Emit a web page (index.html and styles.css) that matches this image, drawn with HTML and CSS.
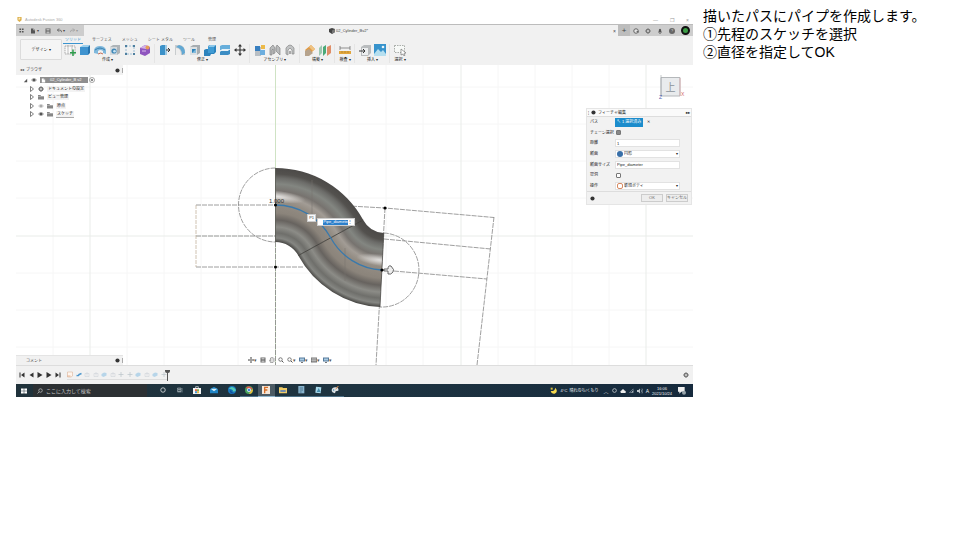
FILE: index.html
```html
<!DOCTYPE html>
<html lang="ja">
<head>
<meta charset="utf-8">
<meta name="viewport" content="width=device-width, initial-scale=1">
<title>パイプの作成</title>
<link rel="stylesheet" href="styles.css">
</head>
<body>
<svg class="defs" aria-hidden="true">
  <symbol id="grid" viewBox="0 0 12 12"><path d="M1 1h4v4H1zM7 1h4v4H7zM1 7h4v4H1zM7 7h4v4H7z" fill="#555"/></symbol>
  <symbol id="doc" viewBox="0 0 12 12"><path d="M2 1h5l3 3v7H2z" fill="#555"/><path d="M7 1v3h3" stroke="#ddd" fill="none"/></symbol>
  <symbol id="page" viewBox="0 0 12 12"><path d="M2 1h5l3 3v7H2z" fill="#fff"/><path d="M7 1v3h3" stroke="#888" fill="none"/></symbol>
  <symbol id="save" viewBox="0 0 12 12"><path d="M1 1h10v10H1z" fill="#666"/><path d="M3 2h6v3H3zM3 7h6v4H3z" fill="#bbb"/></symbol>
  <symbol id="undo" viewBox="0 0 12 12"><path d="M5 1 1 5l4 4M1 5h6q4 0 4 5" fill="none" stroke="currentColor" stroke-width="1.6"/></symbol>
  <symbol id="sketch" viewBox="0 0 12 12"><path d="M1 2h10v8H1z" fill="#fafafa" stroke="#8b8b8b" stroke-width=".7" stroke-dasharray="1.5 .7"/><path d="M4 1v9M8 1v9" stroke="#999" stroke-width=".6"/><path d="M9 5.500v6.500M6 8.800h6" stroke="#2f9d4d" stroke-width="1.500"/></symbol>
  <symbol id="box" viewBox="0 0 12 12"><path d="m1 3 3-2h7L9 3z" fill="#9dd0ed"/><path d="M1 3h8v8H1z" fill="#3f93cf"/><path d="m9 3 2-2v8l-2 2z" fill="#2774af"/></symbol>
  <symbol id="revolve" viewBox="0 0 12 12"><path d="M0 9V6q1-4 6-4t6 4v4L9 9V7Q6 5 4 7v3z" fill="#7fb8dc"/><path d="M1 6q5-4 10 0" stroke="#397fae" fill="none"/><path d="M4 10q3-2 5 0" stroke="#c06b55" fill="none"/></symbol>
  <symbol id="hole" viewBox="0 0 12 12"><path d="m1 3 3-2h7v8l-3 2H1z" fill="#aeb4b8"/><path d="M1 3h7v8H1z" fill="#d5d9dc"/><circle cx="5" cy="7" r="2.600" fill="#3f88b8"/><circle cx="5.500" cy="7.300" r="1.300" fill="#c9e3f2"/></symbol>
  <symbol id="frame" viewBox="0 0 12 12"><path d="M2 2h8v8H2z" fill="none" stroke="#8ab4d0" stroke-width=".8" stroke-dasharray="2 1"/><path d="M1 1h2v2H1zM9 1h2v2H9zM1 9h2v2H1zM9 9h2v2H9z" fill="#4e7f9f"/></symbol>
  <symbol id="form" viewBox="0 0 12 12"><path d="m1 4 5-3 5 2v6l-5 3-5-2z" fill="#8f55bf"/><path d="m1 4 5-3 5 2-4 2z" fill="#d2b1e8"/><circle cx="8.500" cy="3.500" r="2" fill="#e59b55"/><path d="M3 7h4" stroke="#d9bbed"/></symbol>
  <symbol id="press" viewBox="0 0 12 12"><path d="m1 2 2-1h3v10H1z" fill="#3b91c8"/><path d="M6 1h2v10H6z" fill="#9fcae5"/><path d="M7 6h4M9 4l2 2-2 2" stroke="#333" fill="none"/></symbol>
  <symbol id="fillet" viewBox="0 0 12 12"><path d="M1 1h5q5 1 5 7v3H1z" fill="#c8ccce"/><path d="M5 1q6 1 6 8l-3 2Q8 4 2 3z" fill="#62a8d3"/><path d="M2 4q5 0 5 7H2z" fill="#eee"/></symbol>
  <symbol id="shell" viewBox="0 0 12 12"><path d="m1 3 3-2h7v8l-3 2H1z" fill="#a7adb1"/><path d="M1 3h7v8H1z" fill="#dce0e2"/><path d="M3 5h4v4H3z" fill="#2f83ba"/><path d="m3 9 4-4v4z" fill="#83bbdc"/></symbol>
  <symbol id="combine" viewBox="0 0 12 12"><path d="m4 2 2-1h6v7l-2 2H7l-1 2H0V6l2-1h2z" fill="#2c83bd"/><path d="M4 3h6v6H4z" fill="#3f9bd4"/><path d="m4 3 2-2h6l-2 2z" fill="#8dc7e9"/></symbol>
  <symbol id="split" viewBox="0 0 12 12"><path d="m1 2 2-1h8v4L9 6H1z" fill="#67aedb"/><path d="m1 8 2-2h8v4l-2 1H1z" fill="#3c8dc4"/><path d="m1 7 2-2h8L9 7z" fill="#e8f2f8"/></symbol>
  <symbol id="move" viewBox="0 0 12 12"><path d="M6 1v10M1 6h10" stroke="#333" stroke-width="1.100"/><path d="m6 0 2 2.500H4zM6 12l2-2.500H4zM0 6l2.500-2v4zM12 6 9.500 4v4z" fill="#333"/></symbol>
  <symbol id="component" viewBox="0 0 12 12"><path d="M1 3h6v9H1z" fill="#b8bfc5"/><path d="M1 2h5v5H1z" fill="#387fc0"/><path d="M6 6h5v5H6z" fill="#6daede"/><path d="M7 1h4v4H7z" fill="#edba48"/></symbol>
  <symbol id="joint" viewBox="0 0 12 12"><path d="M1 11V4l3-3 2 3v5l-2 1V5L3 6v5zM11 11V4L8 1 7 3v4l2 2z" fill="#b9bbbc" stroke="#777" stroke-width=".6"/></symbol>
  <symbol id="asbuilt" viewBox="0 0 12 12"><path d="M2 10V4q4-6 8 0v6H8V6L6 4 4 6v5z" fill="#c1c3c4" stroke="#888" stroke-width=".7"/><path d="M5 7h2v3H5z" fill="#a9a9a9"/></symbol>
  <symbol id="plane" viewBox="0 0 12 12"><path d="m1 6 6-5 4 4-6 6z" fill="#df9a46"/><path d="m1 7 4-2 4 4-4 3H1z" fill="#b6a38d"/><path d="m7 1 4 4-2 2-4-4z" fill="#efc382"/></symbol>
  <symbol id="planes" viewBox="0 0 12 12"><path d="m0 4 3-3v8l-3 3z" fill="#9dc9b2"/><path d="m4 3 3-2v8l-3 3z" fill="#4ba978"/><path d="m8 3 4-2v8l-4 3z" fill="#df8e68"/></symbol>
  <symbol id="measure" viewBox="0 0 12 12"><path d="M0 7h12v3H0z" fill="#e2a63c"/><path d="M1 4h10M1 2v4M11 2v4" stroke="#666" stroke-width=".7"/><path d="M3 7v2M6 7v2M9 7v2" stroke="#8e6c30" stroke-width=".5"/></symbol>
  <symbol id="insert" viewBox="0 0 12 12"><path d="m2 3 3-2h7v8l-3 3H2z" fill="#b9bcbe"/><path d="M3 4h6v7H3z" fill="#eceeef"/><path d="M0 7h6M4 5l2 2-2 2" stroke="#333" fill="none"/></symbol>
  <symbol id="image" viewBox="0 0 12 12"><path d="M0 0h12v12H0z" fill="#3793cc"/><path d="m0 10 4-5 3 3 2-2 3 4v2H0z" fill="#b6dfef"/><circle cx="9" cy="3" r="1.300" fill="#e7f4fa"/></symbol>
  <symbol id="select" viewBox="0 0 12 12"><path d="M.5 1.500h10v7H.5z" fill="#f7f9f7" stroke="#8a8f8a" stroke-width=".7" stroke-dasharray="1.500 1"/><path d="m7 5 5 4-2 .3 1 2-1 .7-1-2-2 1z" fill="#fff" stroke="#666" stroke-width=".6"/></symbol>
  <symbol id="eye" viewBox="0 0 12 12"><path d="M0 6q6-8 12 0-6 8-12 0z" fill="#aaa"/><circle cx="6" cy="6" r="2.500" fill="#555"/></symbol>
  <symbol id="folder" viewBox="0 0 12 12"><path d="M0 2h5l1 2h6v7H0z" fill="#868686"/><path d="M0 5h12" stroke="#ccc"/></symbol>
  <symbol id="gear" viewBox="0 0 12 12"><circle cx="6" cy="6" r="3.500" fill="#ccc" stroke="#777" stroke-width="2.500"/><path d="M6 0v2M6 10v2M0 6h2M10 6h2M2 2l1 1M9 9l1 1M10 2 9 3M2 10l1-1" stroke="#777" stroke-width="1.500"/></symbol>
  <symbol id="tri" viewBox="0 0 12 12"><path d="m3 1 6 5-6 5z" fill="#fff" stroke="#555" stroke-width="1.500"/></symbol>
  <symbol id="tri-open" viewBox="0 0 12 12"><path d="M10 2v8H2z" fill="#555"/></symbol>
  <symbol id="pin" viewBox="0 0 12 12"><circle cx="6" cy="6" r="5" fill="#333"/></symbol>
  <symbol id="target" viewBox="0 0 12 12"><circle cx="6" cy="6" r="5" fill="none" stroke="#888" stroke-width="1.500"/><circle cx="6" cy="6" r="2" fill="#666"/></symbol>
  <symbol id="refresh" viewBox="0 0 12 12"><circle cx="6" cy="6" r="4.500" fill="#e5e5e5" stroke="#666" stroke-width="2"/><path d="M6 6h5v4z" fill="#666"/></symbol>
  <symbol id="hand" viewBox="0 0 12 12"><path d="m3 11-2-5 2 1V2l2-1 1 1 2-1 2 2v6l-2 2z" fill="#ddd" stroke="#666"/></symbol>
  <symbol id="lens" viewBox="0 0 12 12"><circle cx="5" cy="5" r="3.500" fill="none" stroke="currentColor" stroke-width="1.500"/><path d="m8 8 3 3" stroke="currentColor" stroke-width="2"/></symbol>
  <symbol id="search" viewBox="0 0 12 12"><circle cx="7" cy="5" r="3.500" fill="none" stroke="currentColor" stroke-width="1.500"/><path d="m4 8-3 3" stroke="currentColor" stroke-width="1.500"/></symbol>
  <symbol id="screen" viewBox="0 0 12 12"><path d="M0 1h12v8H0z" fill="#567a9c"/><path d="M2 3h8v4H2z" fill="#a9cbe3"/><path d="M4 10h4v2H4z" fill="#777"/></symbol>
  <symbol id="panes" viewBox="0 0 12 12"><path d="M0 1h12v10H0z" fill="#777"/><path d="M1 4h10M1 7h10M4 2v8M8 2v8" stroke="#ddd"/></symbol>
  <symbol id="back" viewBox="0 0 12 12"><path d="m11 1-8 5 8 5z" fill="#333"/></symbol>
  <symbol id="play" viewBox="0 0 12 12"><path d="m1 0 10 6-10 6z" fill="#333"/></symbol>
  <symbol id="first" viewBox="0 0 12 12"><path d="M1 1h2v10H1zM11 1 4 6l7 5z" fill="#333"/></symbol>
  <symbol id="last" viewBox="0 0 12 12"><path d="M9 1h2v10H9zM1 1l7 5-7 5z" fill="#333"/></symbol>
  <symbol id="tsketch" viewBox="0 0 12 12"><path d="M1 1h10v8l-3 2H1z" fill="#fff5ed" stroke="#d7a88b"/><path d="M1 9h6" stroke="#d27d4b"/></symbol>
  <symbol id="tpipe" viewBox="0 0 12 12"><path d="M1 8q5 1 5-2l5-2" fill="none" stroke="#4e98cd" stroke-width="3"/></symbol>
  <symbol id="tfaint" viewBox="0 0 12 12"><path d="M2 4h8v6H2zM6 1v7" fill="none" stroke="#c8cfd5"/></symbol>
  <symbol id="tblue" viewBox="0 0 12 12"><path d="m1 5 5-3 5 1v5l-6 3-4-2z" fill="#b7d5e9"/></symbol>
  <symbol id="tmove" viewBox="0 0 12 12"><path d="M6 1v10M1 6h10" stroke="#bcc5cb" stroke-width="1.500"/></symbol>
  <symbol id="win" viewBox="0 0 12 12"><path d="M0 1h5.500v4.500H0zM6.500 1H12v4.500H6.500zM0 6.500h5.500V11H0zM6.500 6.500H12V11H6.500z" fill="#fff"/></symbol>
  <symbol id="ring" viewBox="0 0 12 12"><circle cx="6" cy="6" r="4.500" fill="none" stroke="#eee" stroke-width="1.500"/></symbol>
  <symbol id="tasks" viewBox="0 0 12 12"><path d="M1 2h7v2H1zM1 5h7v3H1zM1 9h7v1H1zM10 2v9" fill="none" stroke="#bbc5ca"/></symbol>
  <symbol id="store" viewBox="0 0 12 12"><path d="M0 3h12v9H0z" fill="#f4f4f4"/><path d="M4 3V1h4v2" fill="none" stroke="#eee"/><path d="M3 5h3v3H3z" fill="#e66345"/><path d="M6 5h3v3H6z" fill="#80b45b"/><path d="M3 8h3v3H3z" fill="#469bd3"/><path d="M6 8h3v3H6z" fill="#e5b94b"/></symbol>
  <symbol id="mail" viewBox="0 0 12 12"><path d="m0 5 6-4 6 4v6H0z" fill="#1f84c5"/><path d="M1 4h10L6 8z" fill="#d8f0f8"/></symbol>
  <symbol id="edge" viewBox="0 0 12 12"><circle cx="6" cy="6" r="6" fill="#1976bd"/><path d="M1 4q6-6 11 2-1 3-5 2 2-3-6-4z" fill="#54cbb6"/><path d="M3 7q0 5 6 4Q4 9 5 6z" fill="#0f4f9c"/></symbol>
  <symbol id="chrome" viewBox="0 0 12 12"><circle cx="6" cy="6" r="6" fill="#46a45c"/><path d="M1 3q5-6 11 2H6z" fill="#dc5145"/><path d="M12 5q0 7-6 7l3-6z" fill="#e7bc3c"/><circle cx="6" cy="6" r="2.600" fill="#4485dc" stroke="#fff"/></symbol>
  <symbol id="fusion" viewBox="0 0 12 12"><path d="M0 0h12v12H0z" fill="#f4e6d8"/><path d="M4 11V2h5M4 6h4" fill="none" stroke="#d56e27" stroke-width="2"/></symbol>
  <symbol id="files" viewBox="0 0 12 12"><path d="M0 2h5l1 1h6v8H0z" fill="#f0cc67"/><path d="M2 6h8v3H2z" fill="#708bad"/></symbol>
  <symbol id="note" viewBox="0 0 12 12"><path d="M2 0h9v11H2z" fill="#88b4ce"/><path d="M4 3h5M4 6h5M4 9h3" stroke="#345970"/></symbol>
  <symbol id="note2" viewBox="0 0 12 12"><path d="m3 1 8 1-1 9-8-1z" fill="#a9d9eb"/><path d="m4 9 3-6 3 6" fill="#478eae"/></symbol>
  <symbol id="paint" viewBox="0 0 12 12"><path d="M1 6q1-5 7-4 4 1 3 5l-4 1-1 3q-5-1-5-5z" fill="#dce2e5"/><path d="m7 5 4-5" stroke="#df8d51" stroke-width="1.500"/><circle cx="4" cy="6" r="1" fill="#3583ae"/></symbol>
  <symbol id="moon" viewBox="0 0 12 12"><path d="M8 1q5 6-1 9-5 1-6-4 6 1 7-5z" fill="#f5d94f"/><path d="M1 1h3v3H1z" fill="#d7bc3c"/></symbol>
  <symbol id="cloud" viewBox="0 0 12 12"><path d="M2 10q-3-3 1-5 3-5 6 0 4 1 2 5z" fill="#eee"/></symbol>
  <symbol id="wifi" viewBox="0 0 12 12"><path d="m1 11 9-9v9z" fill="none" stroke="#b7c0c6"/><path d="m5 11 5-5v5z" fill="#b7c0c6"/></symbol>
  <symbol id="sound" viewBox="0 0 12 12"><path d="M0 4h3l3-3v10L3 8H0z" fill="#bbc4c9"/><path d="M8 3q3 3 0 6M10 1q4 5 0 10" stroke="#bbc4c9" fill="none"/></symbol>
  <symbol id="chat" viewBox="0 0 12 12"><path d="M0 0h10v7H5l-3 3V7H0z" fill="#eee"/><circle cx="9" cy="8.500" r="3" fill="#98a4ab"/></symbol>
  <symbol id="bell" viewBox="0 0 12 12"><path d="M2 9q2-2 2-6 2-3 4 0 0 4 2 6zM5 10h2v2H5z" fill="#555"/></symbol>
  <symbol id="logo" viewBox="0 0 12 12"><path d="M1 0h10v8l-5 4-5-4z" fill="#ddb04d"/><path d="M4 2h4v2H6v3H4z" fill="#fff4cf"/></symbol>
  <symbol id="cube" viewBox="0 0 12 12"><path d="m0 2 6-2 6 2v6l-6 4-6-4z" fill="#444"/><path d="m6 5 6-3v6l-6 4z" fill="#777"/></symbol>
</svg>

<main class="page">
  <section class="app">
    <header class="titlebar">
      <svg class="i5"><use href="#logo"/></svg><span>Autodesk Fusion 360</span>
      <div class="winbtns"><button aria-label="最小化">—</button><button aria-label="元に戻す">❐</button><button aria-label="閉じる">×</button></div>
    </header>
    <div class="quick">
      <div class="quick-left">
        <svg class="i5"><use href="#grid"/></svg>
        <span class="pair"><svg class="i6"><use href="#doc"/></svg>▾</span>
        <svg class="i6"><use href="#save"/></svg>
        <span class="pair"><svg class="i5"><use href="#undo"/></svg>▾</span>
        <span class="pair dim"><svg class="i5 flip"><use href="#undo"/></svg>▾</span>
      </div>
      <div class="doc-tab"><span class="doc-name"><svg class="i6"><use href="#cube"/></svg>02_Cylinder_Bv2*</span><button aria-label="タブを閉じる">×</button></div>
      <div class="quick-right">
        <button class="plus" aria-label="新規タブ">+</button>
        <svg class="i6"><use href="#refresh"/></svg><svg class="i6"><use href="#gear"/></svg><svg class="i6"><use href="#bell"/></svg>
        <span class="help">?</span><span class="avatar"></span>
      </div>
    </div>
    <nav class="ribbon">
      <button class="design">デザイン ▾</button>
      <div class="ribbon-main">
        <div class="tabs">
          <a href="#" class="on">ソリッド</a><a href="#">サーフェス</a><a href="#">メッシュ</a><a href="#">シート メタル</a><a href="#">ツール</a><a href="#" class="manage">管理</a>
        </div>
        <div class="groups">
          <div class="group"><div class="icons"><svg><use href="#sketch"/></svg><svg><use href="#box"/></svg><svg><use href="#revolve"/></svg><svg><use href="#hole"/></svg><svg><use href="#frame"/></svg><svg><use href="#form"/></svg></div><span>作成 ▾</span></div>
          <div class="group"><div class="icons"><svg><use href="#press"/></svg><svg><use href="#fillet"/></svg><svg><use href="#shell"/></svg><svg><use href="#combine"/></svg><svg><use href="#split"/></svg><svg><use href="#move"/></svg></div><span>修正 ▾</span></div>
          <div class="group"><div class="icons"><svg><use href="#component"/></svg><svg><use href="#joint"/></svg><svg><use href="#asbuilt"/></svg></div><span>アセンブリ ▾</span></div>
          <div class="group"><div class="icons"><svg><use href="#plane"/></svg><svg><use href="#planes"/></svg></div><span>構築 ▾</span></div>
          <div class="group"><div class="icons"><svg><use href="#measure"/></svg></div><span>検査 ▾</span></div>
          <div class="group"><div class="icons"><svg><use href="#insert"/></svg><svg><use href="#image"/></svg></div><span>挿入 ▾</span></div>
          <div class="group"><div class="icons"><svg><use href="#select"/></svg></div><span>選択 ▾</span></div>
        </div>
      </div>
    </nav>

    <div class="viewport">
      <svg class="scene" viewBox="16 65 677 300">
        <defs>
          <radialGradient id="bend1" gradientUnits="userSpaceOnUse" cx="275.5" cy="268" r="100">
            <stop offset=".26" stop-color="#494845"/><stop offset=".30" stop-color="#858682"/><stop offset=".35" stop-color="#6f6f6b"/><stop offset=".41" stop-color="#8c8c87"/><stop offset=".48" stop-color="#67635f"/><stop offset=".55" stop-color="#8b847b"/><stop offset=".65" stop-color="#938c83"/><stop offset=".71" stop-color="#a29c95"/><stop offset=".77" stop-color="#77736f"/><stop offset=".84" stop-color="#838681"/><stop offset=".90" stop-color="#6c6c69"/><stop offset=".94" stop-color="#53514e"/><stop offset="1" stop-color="#4c4a48"/>
          </radialGradient>
          <radialGradient id="bend2" gradientUnits="userSpaceOnUse" cx="385" cy="208" r="99">
            <stop offset=".25" stop-color="#4c4a48"/><stop offset=".32" stop-color="#53514e"/><stop offset=".36" stop-color="#6c6c69"/><stop offset=".42" stop-color="#838681"/><stop offset=".48" stop-color="#77736f"/><stop offset=".54" stop-color="#a29c95"/><stop offset=".60" stop-color="#938c83"/><stop offset=".71" stop-color="#8b847b"/><stop offset=".78" stop-color="#67635f"/><stop offset=".85" stop-color="#8c8c87"/><stop offset=".91" stop-color="#6f6f6b"/><stop offset=".96" stop-color="#858682"/><stop offset="1" stop-color="#494845"/>
          </radialGradient>
          <radialGradient id="shine"><stop offset="0" stop-color="#fff" stop-opacity=".7"/><stop offset="1" stop-color="#fff" stop-opacity="0"/></radialGradient>
          <clipPath id="body"><path d="M275.500 168A100 100 0 0 1 363.200 220A25 25 0 0 0 383.800 233L380 307A99 99 0 0 1 298.200 255.500A26 26 0 0 0 275.500 242z"/></clipPath>
        </defs>
        <path d="M53 65v300M127 65v300M164 65v300M201 65v300M238 65v300M312 65v300M349 65v300M386 65v300M423 65v300M498 65v300M535 65v300M572 65v300M609 65v300M16 87h677M16 124h677M16 161h677M16 198h677M16 273h677M16 310h677M16 347h677" class="minor"/>
        <path d="M90 65v300M461 65v300M646 65v300M16 236h677" class="major"/>
        <path d="M275.500 65v300" class="axis"/>
        <g class="dash">
          <path d="M196 205h80M196 236h80M196 267h108M275.500 242v123M275.500 168A37 37 0 0 0 275.500 242"/>
          <path d="M340 205.500 385 208 494 217.500M384 239l107 10M382 270l105 9M494 217 477 365M385 208l-9 157M383.800 233A37 37 0 0 1 380 307"/>
        </g>
        <path d="M196 205v62" class="tan"/>
        <path d="M275.500 168A100 100 0 0 1 363.200 220L298.300 255.500A26 26 0 0 0 275.500 242z" fill="url(#bend1)"/>
        <path d="M363.200 220A25 25 0 0 0 383.800 233L380 307A99 99 0 0 1 298.200 255.500z" fill="url(#bend2)"/>
        <g clip-path="url(#body)">
          <ellipse cx="278" cy="196.500" rx="28" ry="6" transform="rotate(8 278 196.500)" fill="url(#shine)"/>
          <ellipse cx="380" cy="260" rx="24" ry="6" transform="rotate(8 380 260)" fill="url(#shine)"/>
        </g>
        <path d="M298.300 255.500 363.200 220" stroke="#34322f" stroke-width=".8"/>
        <path d="M312 180v34M345 248v33" stroke="#77736d" stroke-width=".5"/>
        <path d="M275.500 168v74M383.800 233 380 307" stroke="#454340" stroke-width=".7"/>
        <path d="M275.500 205A63 63 0 0 1 330.700 237.800A62 62 0 0 0 382 270" fill="none" stroke="#3979ac" stroke-width="1.300"/>
        <circle cx="275.500" cy="205" r="1.500"/><circle cx="275.500" cy="267" r="1.500"/><circle cx="385" cy="208" r="1.600"/><circle cx="382" cy="270" r="1.600"/>
        <path d="M384 269h4q0-4 3-3 4 4 2 6-2 3-5 2v-3h-4z" fill="#eee" stroke="#444" stroke-width=".8"/>
        <text x="269" y="203" class="dim-text">1.000</text>
        <g class="viewcube"><path d="M661 77.500h19v18.500h-19z" fill="#e9ebed" stroke="#b5b8bb"/><path d="M661 75v21" stroke="#9fa4a9" stroke-width=".6"/><path d="M680 78v18" stroke="#dc9a9a" stroke-width=".6"/><text x="670.500" y="90.500" text-anchor="middle" class="top">上</text><text x="659" y="99" fill="#5260b0">Z</text><text x="681" y="96" fill="#d26a6a">X</text></g>
      </svg>

      <aside class="browser">
        <div class="panel-head"><span>◂◂</span><span class="grow">ブラウザ</span><svg class="i5"><use href="#pin"/></svg><i></i></div>
        <ul>
          <li><svg class="i5"><use href="#tri-open"/></svg><svg class="i6"><use href="#eye"/></svg><span class="root"><svg class="i5"><use href="#page"/></svg>02_Cylinder_B v2</span><svg class="i6"><use href="#target"/></svg></li>
          <li class="sub"><svg class="i6"><use href="#tri"/></svg><svg class="i6"><use href="#gear"/></svg><span>ドキュメントの設定</span></li>
          <li class="sub"><svg class="i6"><use href="#tri"/></svg><svg class="i6"><use href="#folder"/></svg><span>ビュー管理</span></li>
          <li class="sub"><svg class="i6"><use href="#tri"/></svg><svg class="i6 faint"><use href="#eye"/></svg><svg class="i6"><use href="#folder"/></svg><span>原点</span></li>
          <li class="sub"><svg class="i6"><use href="#tri"/></svg><svg class="i6"><use href="#eye"/></svg><svg class="i6"><use href="#folder"/></svg><span class="under">スケッチ</span></li>
        </ul>
      </aside>

      <span class="tag">P1</span>
      <div class="float-input"><input aria-label="パイプ直径" value="Pipe_diameter"><span>⋮</span></div>

      <form class="dialog">
        <div class="dialog-head"><span>¦</span><svg class="i5"><use href="#pin"/></svg><span class="grow">フィーチャ編集</span><b>▸▸</b></div>
        <div class="fields">
          <label for="path">パス</label><div><button type="button" id="path" class="picked">↖ 1 選択済み</button><span>✕</span></div>
          <label for="chain">チェーン選択</label><div><input type="checkbox" id="chain" checked></div>
          <label for="dist">距離</label><div><input type="text" id="dist" value="1"></div>
          <label for="section">断面</label><div class="sel"><span class="dot"></span><select id="section"><option>円形</option></select></div>
          <label for="size">断面サイズ</label><div><input type="text" id="size" value="Pipe_diameter"></div>
          <label for="hollow">空洞</label><div><input type="checkbox" id="hollow"></div>
          <label for="op">操作</label><div class="sel"><span class="newbody"></span><select id="op"><option>新規ボディ</option></select></div>
        </div>
        <div class="dialog-foot"><svg class="i5"><use href="#pin"/></svg><button type="button">OK</button><button type="button">キャンセル</button></div>
      </form>

      <div class="comments panel-head"><span class="grow">コメント</span><svg class="i5"><use href="#pin"/></svg><i></i></div>
      <div class="navbar"><span><svg><use href="#move"/></svg>▾</span><svg><use href="#save"/></svg><svg><use href="#hand"/></svg><svg><use href="#lens"/></svg><span><svg><use href="#lens"/></svg>▾</span><span><svg><use href="#screen"/></svg>▾</span><span><svg><use href="#panes"/></svg>▾</span><span><svg><use href="#screen"/></svg>▾</span></div>
    </div>

    <div class="timeline">
      <div class="play"><svg><use href="#first"/></svg><svg><use href="#back"/></svg><svg><use href="#play"/></svg><svg><use href="#play"/></svg><svg><use href="#last"/></svg></div>
      <div class="steps"><svg><use href="#tsketch"/></svg><svg><use href="#tpipe"/></svg><svg><use href="#tfaint"/></svg><svg><use href="#tfaint"/></svg><svg><use href="#tblue"/></svg><svg><use href="#tfaint"/></svg><svg><use href="#tmove"/></svg><svg><use href="#tmove"/></svg><svg><use href="#tblue"/></svg><svg><use href="#tfaint"/></svg><svg><use href="#tblue"/></svg><svg><use href="#tmove"/></svg></div>
      <span class="marker"></span>
      <svg class="settings"><use href="#gear"/></svg>
    </div>

    <footer class="taskbar">
      <svg class="i6 start"><use href="#win"/></svg>
      <label class="search"><svg class="i6"><use href="#search"/></svg><input placeholder="ここに入力して検索"></label>
      <div class="apps"><span><svg class="i6"><use href="#ring"/></svg></span><span><svg class="i6"><use href="#tasks"/></svg></span><span><svg><use href="#store"/></svg></span><span><svg><use href="#mail"/></svg></span><span><svg><use href="#edge"/></svg></span><span class="run"><svg><use href="#chrome"/></svg></span><span class="active"><svg><use href="#fusion"/></svg></span><span class="run"><svg><use href="#files"/></svg></span><span class="run"><svg><use href="#note"/></svg></span><span class="run"><svg><use href="#note2"/></svg></span><span class="run"><svg><use href="#paint"/></svg></span></div>
      <div class="tray"><svg class="i8"><use href="#moon"/></svg><span class="weather">4°C&nbsp; 晴れのち/くもり</span><span>︿</span><svg class="i5"><use href="#ring"/></svg><svg class="i6"><use href="#cloud"/></svg><svg class="i5"><use href="#wifi"/></svg><svg class="i6"><use href="#sound"/></svg><span>A</span><time>16:06<br>2021/10/24</time><svg class="i8"><use href="#chat"/></svg></div>
    </footer>
  </section>

  <section class="notes">
    <p>描いたパスにパイプを作成します。</p>
    <p>①先程のスケッチを選択</p>
    <p>②直径を指定してOK</p>
  </section>
</main>
</body>
</html>
```
FILE: styles.css
```css
* { box-sizing: border-box; }
body { margin: 0; background: #fff; color: #444; font-family: "Liberation Sans", "Noto Sans CJK JP", sans-serif; font-size: 4px; line-height: 6px; }
button, input, select { font: inherit; color: inherit; margin: 0; padding: 0; border: 0; background: none; border-radius: 0; min-width: 0; white-space: nowrap; }
svg { display: block; flex: none; }
a { color: inherit; text-decoration: none; }
.defs { position: absolute; width: 0; height: 0; }
.i5 { width: 5px; height: 5px; }
.i6 { width: 6px; height: 6px; }
.i8 { width: 8px; height: 8px; }
.grow { flex: 1; }

.page { display: grid; grid-template-columns: minmax(0, 677fr) minmax(0, 257fr); gap: 10px; padding-left: 16px; align-items: start; }
.notes { padding-top: 7px; color: #000; font-family: "Liberation Sans", "Noto Sans CJK JP", sans-serif; font-size: 14px; line-height: 18px; }
.notes p { margin: 0; white-space: nowrap; }

.app { padding-top: 15px; }
.titlebar { display: flex; align-items: center; gap: 3px; height: 9px; padding: 0 4px 0 1px; color: #aaa; }
.winbtns { display: flex; gap: 12px; margin-left: auto; color: #999; font-size: 5px; }

.quick { display: flex; height: 12px; background: #f1f1f1; border-top: 1px solid #bcbcbc; }
.quick-left { display: flex; align-items: center; gap: 6px; width: 68px; padding-left: 3px; background: #cdcdcd; }
.pair { display: flex; align-items: center; gap: 1px; }
.pair + .pair { margin-left: -1px; }
.dim { color: #999; }
.flip { transform: scaleX(-1); }
.doc-tab { flex: 1; display: flex; align-items: center; padding-right: 2px; font-size: 5px; }
.doc-name { flex: 1; display: flex; align-items: center; justify-content: center; gap: 1px; font-size: 4px; }
.quick-right { display: flex; align-items: center; gap: 6px; width: 75px; padding-right: 3px; background: #cdcdcd; }
.plus { align-self: stretch; width: 12px; margin-right: -3px; background: #bdbdbd; font-size: 8px; }
.help { width: 6px; height: 6px; border-radius: 50%; background: #666; color: #ddd; text-align: center; }
.avatar { width: 9px; height: 9px; margin-left: auto; border: 2px solid #111; border-radius: 50%; background: #3b9c45; }

.ribbon { display: flex; height: 29px; background: #f1f1f1; }
.design { width: 42px; height: 21px; margin: 3px 0 0 4px; border: 1px solid #dcdcdc; border-radius: 1px; background: #f5f5f5; color: #222; }
.ribbon-main { width: 352px; margin-left: -2px; }
.tabs { display: flex; gap: 8px; padding-left: 3px; height: 8px; white-space: nowrap; }
.tabs a { flex: none; height: 8px; padding: 0 1px; line-height: 7px; color: #555; }
.tabs .on { padding: 0 2px; color: #3a94cf; border-bottom: 1px solid #3a94cf; }
.tabs .manage { padding-left: 4px; }
.groups { display: flex; }
.group { display: flex; flex-direction: column; align-items: center; padding: 0 3px 0 4px; border-right: 1px solid #e5e5e5; }
.group:last-child { border-right: 0; }
.icons { display: flex; gap: 3px; }
.icons svg { width: 12px; height: 12px; }
.group span { width: 0; display: flex; justify-content: center; margin-top: 1px; white-space: nowrap; color: #222; }

.viewport { position: relative; overflow: hidden; background: #fff; }
.scene { width: 100%; height: auto; }
.minor { fill: none; stroke: #f6f6f6; stroke-width: 1; }
.major { fill: none; stroke: #e9ece9; stroke-width: 1; }
.axis { stroke: #cfe3c4; stroke-width: 1; }
.dash path { fill: none; stroke: #868686; stroke-width: .8; stroke-dasharray: 5 1; }
.tan { stroke: #c4b4a0; stroke-width: .8; stroke-dasharray: 4 1; }
.dim-text { font-size: 6px; fill: #333; }
.viewcube text { font-size: 5px; }
.viewcube .top { font-size: 10px; fill: #8c949b; }

.browser { position: absolute; top: 0; left: 0; width: 107px; }
.panel-head { display: flex; align-items: center; gap: 2px; height: 10px; padding: 0 0 0 4px; background: #f1f1f1; }
.panel-head i { width: 1px; height: 5px; background: #aaa; }
.browser ul { display: flex; flex-direction: column; justify-content: space-between; height: 42px; margin: 1px 0 0; padding: 0; list-style: none; }
.browser li { display: flex; align-items: center; gap: 3px; height: 8px; padding-left: 7px; white-space: nowrap; color: #222; }
.browser .sub { padding-left: 13px; }
.browser li span { padding: 0 1px; background: #f3f3f3; }
.browser li .root { display: flex; align-items: center; gap: 4px; width: 48px; margin-right: -2px; background: #8f8f8f; color: #fff; }
.browser li .under { border-bottom: 1px solid #aaa; }
.faint { opacity: .5; }

.tag { position: absolute; left: 43%; top: 49.500%; width: 9px; height: 8px; background: #fafafa; border: 1px solid #ccc; text-align: center; }
.float-input { position: absolute; left: 44.500%; top: 51%; display: flex; align-items: center; justify-content: space-between; width: 38px; height: 8px; padding: 0 2px 0 5px; background: #fff; border: 1px solid #ccc; }
.float-input input { width: 25px; height: 5px; background: #2d80cb; color: #fff; }

.dialog { position: absolute; top: 43px; right: 1px; width: 106px; background: #f2f2f2; border: 1px solid #e5e5e5; color: #222; }
.dialog-head { display: flex; align-items: center; gap: 2px; height: 8px; padding: 0 1px; background: #fafafa; border-bottom: 1px solid #ddd; }
.fields { display: grid; grid-template-columns: 25px 1fr; grid-template-rows: repeat(7, 1fr); align-items: center; height: 74px; padding: 0 11px 0 3px; white-space: nowrap; }
.fields div { display: flex; align-items: center; gap: 4px; }
.picked { width: 28px; height: 9px; background: #1b8ccc; color: #fff; }
.fields input[type="text"] { width: 100%; height: 8px; padding-left: 1px; background: #fff; border: 1px solid #e2e2e2; }
.fields input[type="checkbox"] { appearance: none; width: 5px; height: 5px; margin-left: 1px; border: 1px solid #777; border-radius: 1px; background: #fff; }
.fields input[type="checkbox"]:checked { background: #888; }
.fields .sel { height: 8px; gap: 1px; padding: 0 1px; background: #fff; border: 1px solid #e2e2e2; }
.sel::after { content: "▾"; }
.sel select { flex: 1; appearance: none; }
.dot { width: 6px; height: 6px; border-radius: 50%; background: #386fa8; }
.newbody { width: 6px; height: 6px; border: 1px solid #d88a62; border-radius: 2px; background: #fff; }
.dialog-foot { display: flex; align-items: center; gap: 3px; height: 13px; padding: 0 3px; border-top: 1px solid #ddd; }
.dialog-foot svg { margin-right: auto; }
.dialog-foot button { width: 22px; height: 8px; border: 1px solid #ccc; background: #ededed; color: #666; }

.comments { position: absolute; left: 0; bottom: 0; width: 107px; padding-left: 10px; border-top: 1px solid #e4e4e4; }
.navbar { position: absolute; left: 34.300%; bottom: 2px; display: flex; align-items: center; gap: 3px; color: #555; font-size: 5px; }
.navbar span { display: flex; align-items: center; }
.navbar svg { width: 6px; height: 6px; }

.timeline { display: flex; align-items: center; height: 19px; padding: 0 4px 0 3px; background: #f1f1f1; border-top: 1px solid #ddd; }
.play { display: flex; gap: 3px; }
.play svg { width: 6px; height: 6px; }
.steps { display: flex; justify-content: space-between; width: 100px; margin-left: 6px; padding-bottom: 1px; border-bottom: 1px solid #ddd; }
.steps svg { width: 6px; height: 7px; }
.marker { width: 1px; height: 11px; background: #555; display: flex; justify-content: center; }
.marker::before { content: ""; flex: none; width: 5px; height: 3px; border-radius: 0 0 2px 2px; background: #555; }
.settings { width: 6px; height: 6px; margin-left: auto; }

.taskbar { display: flex; align-items: center; height: 13px; background: linear-gradient(90deg, #20323b, #1e3441 50%, #162a3d); color: #eef1f3; }
.start { margin: 0 6px 0 5px; }
.search { display: flex; align-items: center; gap: 3px; width: 114px; height: 13px; padding-left: 4px; background: #2c3033; color: #bbb; font-size: 5px; }
.search input { flex: 1; }
.search input::placeholder { color: #c2c2c2; opacity: 1; }
.apps { display: flex; width: 197px; padding-left: 7px; }
.apps span { flex: 1; display: flex; align-items: center; justify-content: center; height: 13px; border-bottom: 1px solid transparent; }
.apps svg:not(.i6) { width: 8px; height: 8px; }
.apps .run { border-color: #4c7086; }
.apps .active { background: #4c5b64; border-color: #8fb6ce; }
.tray { display: flex; align-items: center; gap: 3px; margin-left: auto; padding-right: 7px; white-space: nowrap; font-size: 5px; }
.weather { padding-right: 2px; font-size: 4px; }
.tray time { font-size: 4px; line-height: 5px; text-align: center; margin-right: 3px; }
```
